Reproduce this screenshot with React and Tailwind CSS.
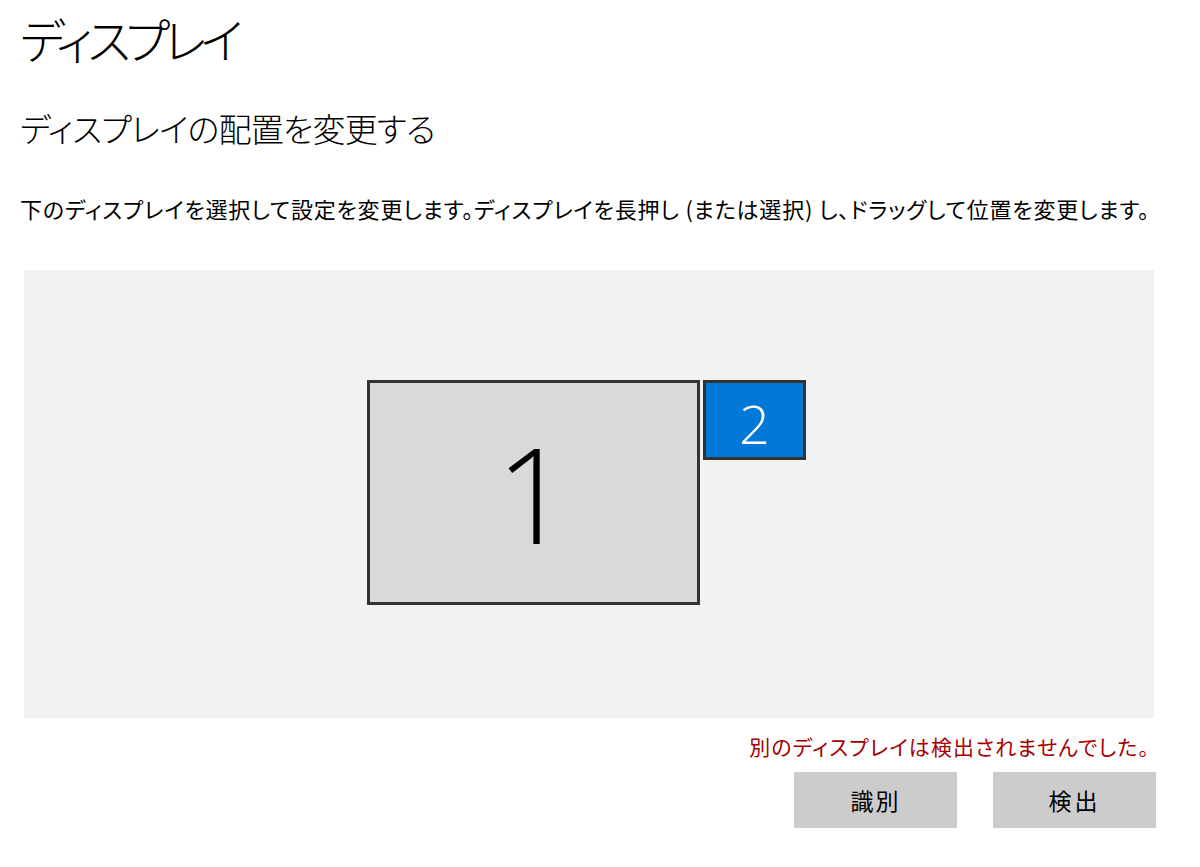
const jp = "font-['Segoe_UI','Noto_Sans_CJK_JP',sans-serif] [font-feature-settings:'palt']";

const Monitor = ({ n, className, textClass }) => (
  <div className={`absolute flex items-center justify-center border-[3px] border-[#333333] ${className}`}>
    <span className={`font-['Open_Sans',sans-serif] font-light leading-none ${textClass}`}>{n}</span>
  </div>
);

export default function App() {
  return (
    <div className={`w-[1200px] h-[867px] bg-white text-black ${jp} overflow-hidden`}>
      <div className="pl-[20px] pt-[10px]">
        <h1 className="text-[48px] font-light leading-[56px] tracking-[-5.5px]">ディスプレイ</h1>
        <h2 className="mt-[42px] text-[33px] font-light leading-[40px] tracking-[-0.8px]">ディスプレイの配置を変更する</h2>
        <p className="mt-[45px] text-[22px] leading-[30px] tracking-[0.8px]">
          下のディスプレイを選択して設定を変更します。ディスプレイを長押し (または選択) し、ドラッグして位置を変更します。
        </p>
      </div>

      <div className="ml-[24px] mt-[47px] w-[1130px] h-[448px] bg-[#f2f2f2] relative">
        <Monitor n="1" className="left-[343px] top-[110px] w-[333px] h-[225px] bg-[#d9d9d9]" textClass="text-[132px] text-black" />
        <Monitor n="2" className="left-[679px] top-[110px] w-[103px] h-[80px] bg-[#0078d7] pt-[6px]" textClass="text-[54px] text-white" />
      </div>

      <div className="w-[1156px] flex flex-col items-end">
        <p className="mt-[13px] mr-[6px] text-[21px] leading-[30px] tracking-[1.1px] text-[#a80000]">別のディスプレイは検出されませんでした。</p>
        <div className="mt-[11px] flex gap-[36px]">
          <button className="w-[163px] h-[56px] bg-[#cccccc] text-[23px] tracking-[2px]">識別</button>
          <button className="w-[163px] h-[56px] bg-[#cccccc] text-[23px] tracking-[3px]">検出</button>
        </div>
      </div>
    </div>
  );
}
